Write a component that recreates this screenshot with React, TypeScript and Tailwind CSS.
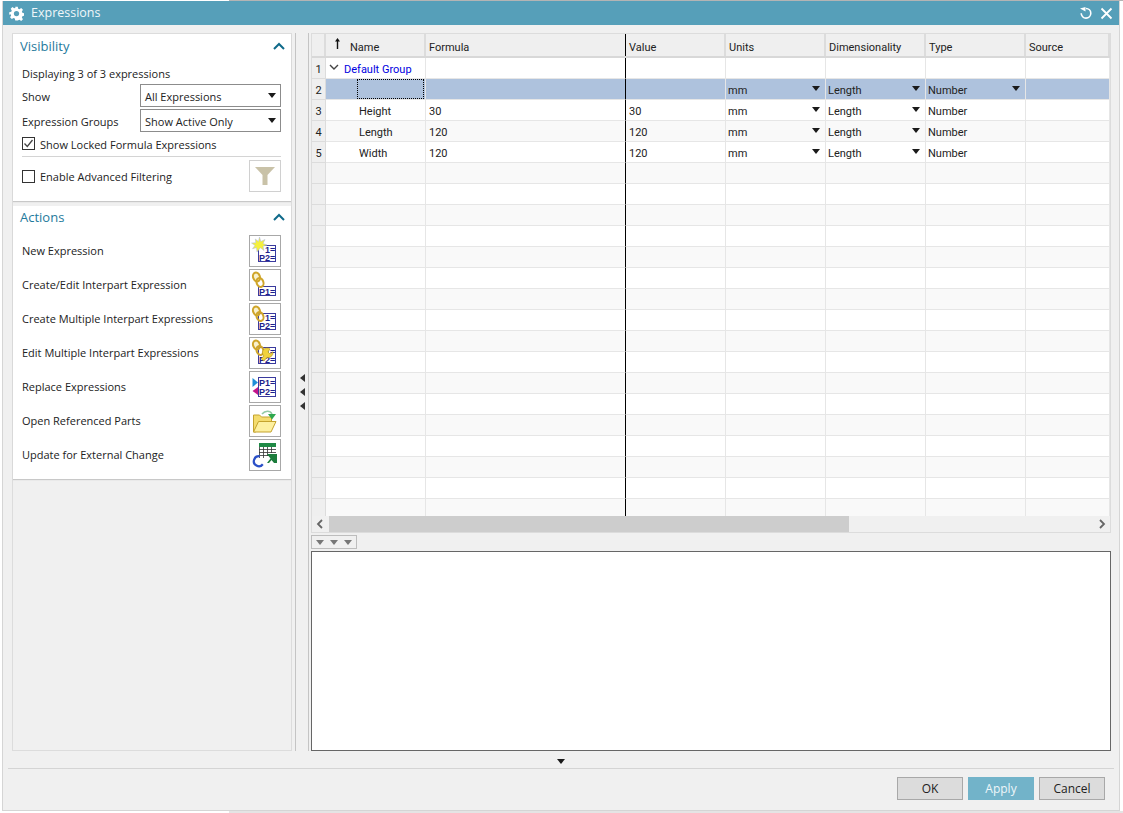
import type { ReactNode } from "react";

const FONT = "font-['Open_Sans','Noto_Sans',sans-serif]";
const ICON_FONT = "Liberation Sans";

function Caret({ className = "" }: { className?: string }) {
  return (
    <svg width="8" height="5" viewBox="0 0 8 5" className={className}>
      <path d="M0 0h8L4 5z" fill="#1a1a1a" />
    </svg>
  );
}

function Gear() {
  return (
    <svg width="15" height="15" viewBox="0 0 24 24">
      <path
        d="M10 1h4l.7 3.200 2 .8 2.800-1.700 2.800 2.800-1.700 2.800.8 2 3.200.7v4l-3.200.7-.8 2 1.700 2.800-2.800 2.800-2.800-1.700-2 .8L14 23h-4l-.7-3.200-2-.8-2.800 1.700-2.800-2.800 1.700-2.800-.8-2L.4 14v-4l3.200-.7.8-2L2.700 4.500l2.800-2.800 2.800 1.700 2-.8z"
        fill="white"
      />
      <circle cx="12" cy="12" r="4.200" fill="#569fb9" />
    </svg>
  );
}

function Checkbox({ checked }: { checked?: boolean }) {
  return (
    <span className="w-[13px] h-[13px] border border-[#333] bg-white flex items-center justify-center shrink-0">
      {checked && (
        <svg width="11" height="11" viewBox="0 0 11 11">
          <path d="M1.500 5.500l2.800 3L9.500 2" fill="none" stroke="#444" strokeWidth="1.300" />
        </svg>
      )}
    </span>
  );
}

function Select({ value }: { value: string }) {
  return (
    <div className="w-[141px] h-[23px] border border-[#8c8c8c] bg-white flex items-center justify-between pl-[4px] pr-[4px]">
      <span className="pt-[2px]">{value}</span>
      <Caret />
    </div>
  );
}

function Label({ x, y, children }: { x: number; y: number; children: string }) {
  return (
    <text x={x} y={y} fontSize="9" fontWeight="700" fontFamily={ICON_FONT} fill="#1f1f8c">
      {children}
    </text>
  );
}

function Formula() {
  return (
    <g>
      <rect x="8.500" y="9.500" width="17" height="16" fill="white" stroke="#3a3a9e" />
      <Label x={15} y={17}>1=</Label>
      <Label x={9} y={25}>P2=</Label>
    </g>
  );
}

function Links() {
  return (
    <g fill="none" stroke="#cfa52a" strokeWidth="2">
      <ellipse cx="6.500" cy="7" rx="3.400" ry="4.500" transform="rotate(-20 6.500 7)" fill="#f4e39a" fillOpacity="0.5" />
      <ellipse cx="10" cy="12.500" rx="3.400" ry="4.500" transform="rotate(-20 10 12.500)" />
    </g>
  );
}

function ToolIcon({ kind }: { kind: number }) {
  let art = null;
  if (kind === 0)
    art = (
      <>
        <Formula />
        <path d="M9.500 1l1.300 4.500 4.200-2-2 4 4 1.500-4 1.200 1 4.300-3.600-2.800L7 16l-.5-4.300-4 1 2.500-3.300-3.500-2.400 4.300-.3-.5-3.700 3.200 2.500z" fill="#f5f03c" stroke="#a9b4e6" strokeWidth="0.500" />
      </>
    );
  if (kind === 1)
    art = (
      <>
        <rect x="8.500" y="16.500" width="17" height="9" fill="white" stroke="#3a3a9e" />
        <Label x={9} y={25}>P1=</Label>
        <Links />
      </>
    );
  if (kind === 2)
    art = (
      <>
        <Formula />
        <Links />
      </>
    );
  if (kind === 3)
    art = (
      <>
        <Formula />
        <Links />
        <path d="M14 18a4.500 4.500 0 0 1 6-7l-2 3 2 2 3-2.200a5 5 0 0 1-6 5.700l-3.200 3.500-2.800-2.500z" fill="#f0d23c" stroke="#a98716" strokeWidth="0.600" />
      </>
    );
  if (kind === 4)
    art = (
      <>
        <rect x="8.500" y="5.500" width="17" height="19" fill="white" stroke="#3a3a9e" />
        <Label x={9} y={14}>P1=</Label>
        <Label x={9} y={23}>P2=</Label>
        <path d="M2.500 6l5.500 4.500L2.500 15z" fill="#1f8fd8" />
        <path d="M8 15v8l-5.500-4z" fill="#c2138a" />
      </>
    );
  if (kind === 5)
    art = (
      <>
        <path d="M3.500 26V9h6l2 2h10v4l-16 11z" fill="#f4dc6e" stroke="#c4a32e" />
        <path d="M3.500 26l5-10.500H26L21 26z" fill="#fdf0a0" stroke="#c4a32e" />
        <path d="M12 8c3-3.500 8-4 10 0" fill="none" stroke="#93c9a5" strokeWidth="1.600" />
        <path d="M18 8h8l-4 5.500z" fill="#2fa84f" />
      </>
    );
  if (kind === 6)
    art = (
      <>
        <rect x="9" y="3" width="17" height="4" fill="#1f8a46" />
        <path d="M9.500 7v11M13.500 7v11M17.500 7v9M21.500 7v6M9 9.500h17M9 12.500h17M9 15.500h10" stroke="#333" strokeWidth="0.800" fill="none" />
        <path d="M17 14h10v9h-3l-2.500-3-2.500 3h-2l3.500-4.500z" fill="#1c7c3c" />
        <path d="M12.800 24.300a5 5 0 1 1-3-8" fill="none" stroke="#2b50c8" strokeWidth="2.200" />
      </>
    );
  return (
    <span className="w-[32px] h-[32px] border border-[#a8a8a8] bg-white shrink-0 flex items-center justify-center">
      <svg width="30" height="30" viewBox="0 0 30 30">
        {art}
      </svg>
    </span>
  );
}

function PanelHeader({ title }: { title: string }) {
  return (
    <div className="flex items-center justify-between h-[22px] pl-[7px] pr-[6px]">
      <span className="text-[13px] text-[#1f7a9c]">{title}</span>
      <svg width="12" height="8" viewBox="0 0 12 8">
        <path d="M1 7l5-5 5 5" fill="none" stroke="#0f6a8a" strokeWidth="2" />
      </svg>
    </div>
  );
}

const actions = [
  "New Expression",
  "Create/Edit Interpart Expression",
  "Create Multiple Interpart Expressions",
  "Edit Multiple Interpart Expressions",
  "Replace Expressions",
  "Open Referenced Parts",
  "Update for External Change",
];

const rows = [
  { n: "1", group: true },
  { n: "2", sel: true, name: "", f: "", v: "", drop: true },
  { n: "3", name: "Height", f: "30", v: "30", drop: true },
  { n: "4", name: "Length", f: "120", v: "120", drop: true },
  { n: "5", name: "Width", f: "120", v: "120", drop: true },
];
const blanks = Array.from({ length: 17 }, (_, i) => i);

const cols = "grid grid-cols-[14px_100px_200px_100px_100px_100px_100px_1fr]";

function Cell({ className = "", children }: { className?: string; children?: ReactNode }) {
  return <div className={`border-r border-b border-[#e6e6e6] flex items-center min-w-0 pt-[2px] ${className}`}>{children}</div>;
}

function Row({ r, stripe }: { r: any; stripe: boolean }) {
  const bg = r.sel ? "bg-[#aec2dd]" : stripe ? "bg-[#f9f9f9]" : "bg-white";
  const drop = (text: string, arrow = true) => (
    <Cell className="pl-[2px] justify-between">
      <span>{text}</span>
      {arrow && <Caret className="mr-[5px] mb-[4px]" />}
    </Cell>
  );
  return (
    <div className={`${cols} h-[21px] shrink-0 ${bg}`}>
      <div className="bg-[#efefef] border-r border-b border-[#dcdcdc] flex items-center justify-center pt-[2px]">{r.n}</div>
      {r.group ? (
        <Cell className="pl-[3px] text-[#0000e0] whitespace-nowrap">
          <svg width="10" height="6" viewBox="0 0 10 6" className="mr-[5px] mb-[4px]">
            <path d="M1 1l4 4 4-4" fill="none" stroke="#444" strokeWidth="1.400" />
          </svg>
          Default Group
        </Cell>
      ) : (
        <Cell className="pl-[33px]">
          {r.name}
          {r.sel && <span className="-ml-[2px] -mt-[2px] w-[67px] h-[20px] border border-dotted border-black shrink-0" />}
        </Cell>
      )}
      <Cell className="pl-[3px] !border-r-black">{r.f}</Cell>
      <Cell className="pl-[3px]">{r.v}</Cell>
      {r.drop ? drop("mm") : <Cell />}
      {r.drop ? drop("Length") : <Cell />}
      {r.drop ? drop("Number", !!r.sel) : <Cell />}
      <Cell />
    </div>
  );
}

export default function App() {
  return (
    <div className={`w-[1123px] h-[813px] flex flex-col bg-white text-[11px] leading-none text-[#222] overflow-hidden ${FONT}`}>
      <div className="h-[1px] ml-[229px] bg-[#b4b4b4] shrink-0" />
      <div className="flex-1 min-h-0 pl-[2px] pr-[3px]">
        <div className="h-full flex flex-col bg-[#f0f0f0] border-x border-b border-[#d5d5d5]">
          {/* Title bar */}
          <div className="h-[24px] bg-[#569fb9] flex items-center px-[6px] text-white shrink-0">
            <Gear />
            <span className="ml-[7px] text-[12.500px] text-[#f0f7fa]">Expressions</span>
            <div className="ml-auto flex items-center gap-[7px]">
              <svg width="14" height="14" viewBox="0 0 14 14">
                <path d="M7 2.500a4.800 4.800 0 1 1-4.800 4.800" fill="none" stroke="white" strokeWidth="1.600" />
                <path d="M1 2.500L6.500 1v4.500z" fill="white" />
              </svg>
              <svg width="13" height="13" viewBox="0 0 13 13">
                <path d="M1.500 1.500l10 10M11.500 1.500l-10 10" stroke="white" strokeWidth="1.800" />
              </svg>
            </div>
          </div>

          {/* Body */}
          <div className="flex-1 flex pl-[9px] pt-[8px] min-h-0">
            {/* Left column */}
            <div className="w-[280px] h-[718px] border border-[#dcdcdc] flex flex-col gap-[5px] shrink-0">
              <section className="h-[167px] bg-white shadow-[0_1px_1px_#c8c8c8] pt-[1px]">
                <PanelHeader title="Visibility" />
                <div className="pl-[9px] pr-[10px] pt-[8px]">
                  <div className="h-[18px] flex items-center pb-[2px]">Displaying 3 of 3 expressions</div>
                  <div className="h-[25px] flex items-center justify-between">
                    <span className="pt-[2px]">Show</span>
                    <Select value="All Expressions" />
                  </div>
                  <div className="h-[25px] flex items-center justify-between">
                    <span className="pt-[2px]">Expression Groups</span>
                    <Select value="Show Active Only" />
                  </div>
                  <div className="h-[21px] flex items-center gap-[5px]">
                    <Checkbox checked />
                    <span className="pt-[2px]">Show Locked Formula Expressions</span>
                  </div>
                  <div className="border-t border-[#d4d4d4] mt-[2px] pt-[3px] flex items-center justify-between">
                    <div className="flex items-center gap-[5px]">
                      <Checkbox />
                      <span>Enable Advanced Filtering</span>
                    </div>
                    <span className="w-[32px] h-[32px] border border-[#d0d0d0] flex items-center justify-center">
                      <svg width="22" height="20" viewBox="0 0 22 20">
                        <path d="M1 1h20l-7.500 8v10h-5V9z" fill="#c9c2a8" />
                      </svg>
                    </span>
                  </div>
                </div>
              </section>
              <section className="h-[273px] bg-white shadow-[0_1px_1px_#c8c8c8]">
                <PanelHeader title="Actions" />
                <div className="pl-[9px] pr-[10px] pt-[7px] flex flex-col gap-[2px]">
                  {actions.map((a, i) => (
                    <div key={a} className="h-[32px] flex items-center justify-between">
                      <span className="pb-[2px]">{a}</span>
                      <ToolIcon kind={i} />
                    </div>
                  ))}
                </div>
              </section>
            </div>

            {/* Splitter */}
            <div className="w-[14px] h-[718px] ml-[3px] mr-[2px] border-x border-[#c4c4c4] flex flex-col items-center justify-center gap-[6px] shrink-0">
              {[0, 1, 2].map((i) => (
                <svg key={i} width="5" height="8" viewBox="0 0 5 8">
                  <path d="M5 0v8L0 4z" fill="#333" />
                </svg>
              ))}
            </div>

            {/* Right column */}
            <div className="w-[800px] flex flex-col">
              <div className="h-[500px] border border-[#dcdcdc] bg-white flex flex-col font-['Roboto',sans-serif]">
                <div className={`${cols} h-[24px] bg-[#efefef] border-b-2 border-[#d8d8d8] shrink-0`}>
                  <div className="border-r-2 border-[#dcdcdc]" />
                  <div className="border-r-2 border-[#dcdcdc] flex items-center pl-[9px]">
                    <svg width="5" height="11" viewBox="0 0 5 11" className="mb-[4px]">
                      <path d="M2.500 0L5 3.500H3.200V11H1.800V3.500H0z" fill="#111" />
                    </svg>
                    <span className="ml-[10px] pt-[4px]">Name</span>
                  </div>
                  <div className="border-r border-black flex items-center pl-[3px] pt-[4px]">Formula</div>
                  {["Value", "Units", "Dimensionality", "Type", "Source"].map((h) => (
                    <div key={h} className="border-r-2 border-[#dcdcdc] flex items-center pl-[3px] pt-[4px]">
                      {h}
                    </div>
                  ))}
                </div>
                <div className="flex-1 min-h-0 overflow-hidden flex flex-col">
                  {rows.map((r, i) => (
                    <Row key={r.n} r={r} stripe={i % 2 === 1} />
                  ))}
                  {blanks.map((b) => (
                    <Row key={b} r={{ n: "" }} stripe={b % 2 === 0} />
                  ))}
                </div>
                {/* Scrollbar */}
                <div className="h-[16px] bg-[#f0f0f0] flex items-center shrink-0">
                  <svg width="8" height="10" viewBox="0 0 8 10" className="ml-[4px] mr-[5px]">
                    <path d="M6 1L2 5l4 4" fill="none" stroke="#666" strokeWidth="1.800" />
                  </svg>
                  <div className="w-[520px] h-full bg-[#cdcdcd]" />
                  <svg width="8" height="10" viewBox="0 0 8 10" className="ml-auto mr-[4px]">
                    <path d="M2 1l4 4-4 4" fill="none" stroke="#666" strokeWidth="1.800" />
                  </svg>
                </div>
              </div>
              <div className="h-[18px] flex items-center shrink-0">
                <div className="h-[14px] w-[46px] border border-[#bdbdbd] flex items-center justify-center gap-[6px]">
                  {[0, 1, 2].map((i) => (
                    <svg key={i} width="8" height="5" viewBox="0 0 8 5">
                      <path d="M0 0h8L4 5z" fill="#777" />
                    </svg>
                  ))}
                </div>
              </div>
              <div className="h-[200px] border border-[#666] bg-white shrink-0" />
            </div>
          </div>

          {/* Footer */}
          <div className="h-[17px] pt-[3px] flex items-center justify-center shrink-0">
            <Caret />
          </div>
          <div className="mx-[5px] h-[42px] border-t border-[#d4d4d4] flex items-start justify-end gap-[5px] pt-[8px] pr-[9px] shrink-0">
            <button className="w-[66px] h-[23px] border border-[#a8a8a8] bg-[#dcdcdc] text-[#222] text-[12px]">OK</button>
            <button className="w-[66px] h-[23px] bg-[#72b3c9] text-[#eef6f9] text-[12px]">Apply</button>
            <button className="w-[66px] h-[23px] border border-[#a8a8a8] bg-[#dcdcdc] text-[#222] text-[12px]">Cancel</button>
          </div>
        </div>
      </div>
      <div className="h-[2px] ml-[229px] bg-[#e4e4e4] shrink-0" />
    </div>
  );
}
